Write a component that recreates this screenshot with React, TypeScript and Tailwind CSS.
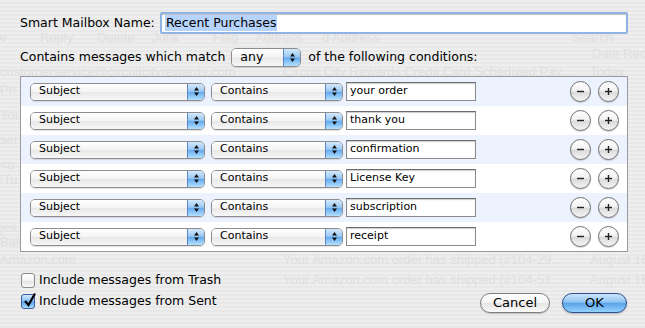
import React from 'react';

// faint text of the mail window that shows through the sheet
const ghost: { x: number; y: number; t: string }[] = [
  { x: -20, y: 31, t: 'New' },
  { x: 40, y: 31, t: 'Reply' },
  { x: 97, y: 31, t: 'Delete' },
  { x: 152, y: 31, t: 'Junk' },
  { x: 213, y: 31, t: 'Flag' },
  { x: 255, y: 31, t: 'Address' },
  { x: 322, y: 31, t: 'd Address' },
  { x: 572, y: 31, t: 'Search' },
  { x: 592, y: 47, t: 'Date Rec' },
  { x: 0, y: 65, t: 'customerservice@circuitcityrewards.com' },
  { x: 283, y: 65, t: 'Circuit City Rewards Credit Card Scheduled Pay...' },
  { x: 590, y: 65, t: 'Today' },
  { x: 0, y: 83, t: 'Pri' },
  { x: 0, y: 108, t: 'You' },
  { x: 0, y: 133, t: 'ser' },
  { x: 0, y: 158, t: '<o' },
  { x: 0, y: 173, t: 'iTu' },
  { x: 0, y: 221, t: 'jes' },
  { x: 0, y: 235, t: 'Bak' },
  { x: 0, y: 253, t: 'Amazon.com' },
  { x: 283, y: 253, t: 'Your Amazon.com order has shipped (#104-29...' },
  { x: 590, y: 253, t: 'August 16' },
  { x: 283, y: 273, t: 'Your Amazon.com order has shipped (#104-51...' },
  { x: 590, y: 273, t: 'August 16' },
];

const rules = ['your order', 'thank you', 'confirmation', 'License Key', 'subscription', 'receipt'];

function Arrows() {
  return (
    <svg width="7" height="11" viewBox="0 0 7 11">
      <path d="M3.5 1 L6 4.5 L1 4.5 Z" fill="#111" />
      <path d="M3.5 10 L6 6.5 L1 6.5 Z" fill="#111" />
    </svg>
  );
}

function Popup({ label, className, textClass }: { label: string; className: string; textClass: string }) {
  return (
    <div
      className={`flex overflow-hidden rounded-[5px] border border-[#8d8d8d] shadow-[0_1px_1px_rgba(0,0,0,0.12)] ${className}`}
    >
      <div className="flex flex-1 items-center bg-[linear-gradient(to_bottom,#ffffff_0%,#f4f4f4_48%,#e8e8e8_52%,#f7f7f7_100%)] pl-2">
        <span className={textClass}>{label}</span>
      </div>
      <div className="flex w-[17px] items-center justify-center border-l border-[#5d86c4] bg-[linear-gradient(to_bottom,#d3e8fb_0%,#9ccaf4_45%,#66abee_52%,#b3e0ff_100%)]">
        <Arrows />
      </div>
    </div>
  );
}

function CircleButton({ plus }: { plus?: boolean }) {
  return (
    <div className="flex h-[21px] w-[21px] items-center justify-center rounded-full border border-[#6f6f6f] bg-[linear-gradient(to_bottom,#ffffff_0%,#f2f2f2_45%,#dcdcdc_55%,#f4f4f4_100%)] shadow-[0_1px_1px_rgba(0,0,0,0.18)]">
      <svg width="11" height="11" viewBox="0 0 11 11">
        <path d="M2 5.5 H9" stroke="#222" strokeWidth="1.4" />
        {plus && <path d="M5.5 2 V9" stroke="#222" strokeWidth="1.4" />}
      </svg>
    </div>
  );
}

function Checkbox({ checked, label }: { checked?: boolean; label: string }) {
  return (
    <div className="flex h-[15px] items-center gap-[4px]">
      {checked ? (
        <div className="relative ml-px h-[15px] w-[14px] rounded-[3px] border border-[#3a5f9c] bg-[linear-gradient(to_bottom,#cfe6fb_0%,#8ec3f1_45%,#5da4ea_52%,#a9dbff_100%)]">
          <svg className="absolute -top-[3px] left-[1px]" width="14" height="16" viewBox="0 0 14 16">
            <path d="M2 9 L5.5 13 L12 1.5" fill="none" stroke="#000" strokeWidth="2.2" />
          </svg>
        </div>
      ) : (
        <div className="ml-px h-[15px] w-[14px] rounded-[3px] border border-[#8a8a8a] bg-[linear-gradient(to_bottom,#ffffff_0%,#f3f3f3_50%,#e3e3e3_55%,#fafafa_100%)]" />
      )}
      <span className="leading-none">{label}</span>
    </div>
  );
}

export default function App() {
  return (
    <div className="relative h-[328px] w-[645px] overflow-hidden bg-[repeating-linear-gradient(to_bottom,#eeeeee_0px,#eeeeee_2px,#e8e8e8_2px,#e8e8e8_4px)] font-['DejaVu_Sans','Lucida_Grande',sans-serif] text-[12.5px] text-black">
      <div className="absolute inset-0 font-['Liberation_Sans',sans-serif] text-[13px] leading-none text-[#dfdfdf]">
        {ghost.map((g, i) => (
          <span key={i} className="absolute whitespace-nowrap" style={{ left: g.x, top: g.y }}>
            {g.t}
          </span>
        ))}
      </div>

      <div className="relative flex flex-col pl-5 pr-[17px]">
        {/* mailbox name */}
        <div className="mt-3 flex h-[22px] items-center">
          <span className="w-[140px] leading-none">Smart Mailbox Name:</span>
          <div className="flex h-[22px] flex-1 items-center rounded-[2px] border-2 border-[#8fb3e2] bg-white shadow-[inset_0_1px_1px_rgba(0,0,0,0.25)]">
            <span className="ml-[3px] bg-[#b5d3fb] px-[1px] leading-[16px]">Recent Purchases</span>
          </div>
        </div>

        {/* match */}
        <div className="mt-[14px] flex h-[19px] items-center">
          <span className="leading-none">Contains messages which match</span>
          <Popup label="any" className="ml-[6px] h-[19px] w-[70px]" textClass="text-[12.5px] leading-none" />
          <span className="ml-[7px] leading-none">of the following conditions:</span>
        </div>

        {/* rules */}
        <div className="mt-[9px] w-[608px] border border-[#9a9a9a] bg-white">
          {rules.map((r, i) => (
            <div
              key={r}
              className={`flex h-[29px] items-center pr-[8px] pl-[9px] ${i % 2 === 0 ? 'bg-[#edf3fe]' : 'bg-white'}`}
            >
              <Popup label="Subject" className="h-[18px] w-[175px]" textClass="text-[11px]" />
              <Popup label="Contains" className="ml-[6px] h-[18px] w-[132px]" textClass="text-[11px]" />
              <div className="ml-[3px] flex h-[19px] w-[130px] items-center border border-[#8a8a8a] border-t-[#6d6d6d] bg-white pl-[3px] text-[11px] shadow-[inset_0_1px_1px_rgba(0,0,0,0.2)]">
                {r}
              </div>
              <div className="ml-auto flex gap-[7px]">
                <CircleButton />
                <CircleButton plus />
              </div>
            </div>
          ))}
        </div>

        {/* bottom */}
        <div className="mt-[21px] flex items-start justify-between">
          <div className="flex flex-col gap-[6px]">
            <Checkbox label="Include messages from Trash" />
            <Checkbox checked label="Include messages from Sent" />
          </div>
          <div className="mt-[20px] mr-px flex gap-[12px]">
            <button className="flex h-[20px] w-[70px] items-center justify-center rounded-full border border-[#7d7d7d] bg-[linear-gradient(to_bottom,#ffffff_0%,#f3f3f3_48%,#e4e4e4_52%,#fbfbfb_100%)] text-[13px] shadow-[0_1px_1px_rgba(0,0,0,0.18)]">
              Cancel
            </button>
            <button className="flex h-[20px] w-[65px] items-center justify-center rounded-full border border-[#2e4f8e] bg-[linear-gradient(to_bottom,#cbe5fb_0%,#90c5f2_45%,#5aa2ea_52%,#94d3ff_100%)] text-[13px] shadow-[0_1px_2px_rgba(0,0,0,0.25)]">
              OK
            </button>
          </div>
        </div>
      </div>
    </div>
  );
}
